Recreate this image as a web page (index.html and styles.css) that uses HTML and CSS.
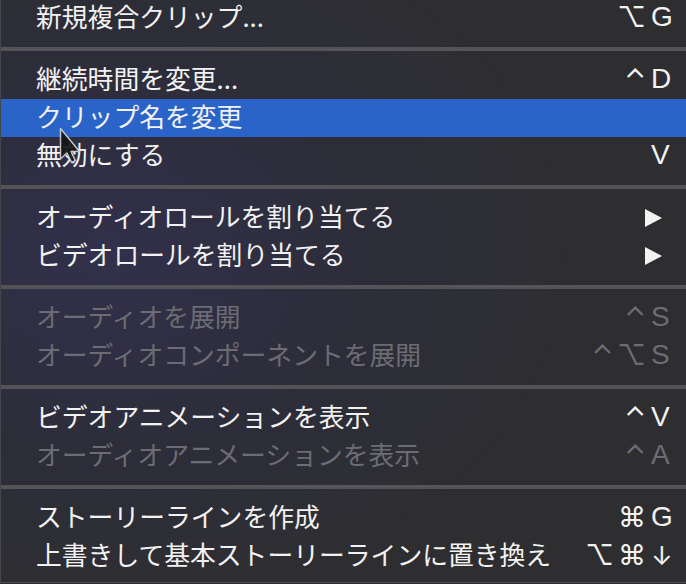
FILE: index.html
```html
<html>
    <head>
        <title>Clip Context Menu</title>
        <link rel="stylesheet" href="styles.css">
    </head>
    <body>
        <div id="menu">
            <div class="group first">
                <div class="item"><span class="label">新規複合クリップ...</span><span class="mods">⌥</span><span class="key">G</span></div>
            </div>
            <div class="sep"></div>
            <div class="group">
                <div class="item"><span class="label">継続時間を変更...</span><span class="mods">⌃</span><span class="key">D</span></div>
                <div class="item selected"><span class="label">クリップ名を変更</span></div>
                <div class="item"><span class="label">無効にする</span><span class="mods"></span><span class="key">V</span></div>
            </div>
            <div class="sep"></div>
            <div class="group">
                <div class="item"><span class="label">オーディオロールを割り当てる</span><span class="submenu"></span></div>
                <div class="item"><span class="label">ビデオロールを割り当てる</span><span class="submenu"></span></div>
            </div>
            <div class="sep"></div>
            <div class="group">
                <div class="item disabled"><span class="label">オーディオを展開</span><span class="mods">⌃</span><span class="key">S</span></div>
                <div class="item disabled"><span class="label">オーディオコンポーネントを展開</span><span class="mods">⌃⌥</span><span class="key">S</span></div>
            </div>
            <div class="sep"></div>
            <div class="group">
                <div class="item"><span class="label">ビデオアニメーションを表示</span><span class="mods">⌃</span><span class="key">V</span></div>
                <div class="item disabled"><span class="label">オーディオアニメーションを表示</span><span class="mods">⌃</span><span class="key">A</span></div>
            </div>
            <div class="sep"></div>
            <div class="group last">
                <div class="item"><span class="label">ストーリーラインを作成</span><span class="mods">⌘</span><span class="key">G</span></div>
                <div class="item"><span class="label">上書きして基本ストーリーラインに置き換え</span><span class="mods">⌥⌘</span><span class="key arrow">↓</span></div>
            </div>
            <svg class="cursor" width="24" height="38" viewBox="0 0 24 38">
                <path d="M1.5 1.5 L1.5 32 L8 26 L12.5 35.5 L16.5 33.8 L12 24.5 L20.5 24.5 Z" fill="#161616" stroke="#cfcfcf" stroke-width="1.5" stroke-linejoin="round" opacity="0.92" />
            </svg>
        </div>
    </body>
</html>
```

FILE: styles.css
```css
body {
    margin: 0;
    background-color: #2c2c33;
    overflow: hidden;
}
#menu {
    position: relative;
    margin-top: -11px;
    border-left: 1px solid #45454c;
    border-bottom: 1px solid #4a4a50;
    background: radial-gradient(ellipse 70% 60% at 15% 45%, #32304b 0%, #2d2d3b 50%, #2e2e31 100%);
    font-family: "Noto Sans CJK JP", sans-serif;
    font-size: 25.8px;
    color: #f2f2f2;
}
.group {
    padding: 10px 0;
}
.group.last {
    padding-bottom: 7px;
}
.sep {
    height: 4px;
    background-color: #535358;
}
.item {
    box-sizing: border-box;
    display: flex;
    align-items: center;
    height: 38px;
    padding: 0 16px 6px 35px;
}
.item.selected {
    background-color: #2a64c8;
}
.item.disabled {
    color: #6c6c74;
}
.label {
    flex: 1;
    white-space: nowrap;
}
.mods {
    font-family: Inter, "DejaVu Sans", sans-serif;
    font-size: 28px;
    letter-spacing: 4px;
    margin-right: 1px;
    margin-top: 4px;
}
.key {
    width: 19px;
    font-family: "Liberation Sans", sans-serif;
    font-size: 28px;
    margin-top: 4px;
}
.key.arrow {
    font-family: Inter, "DejaVu Sans", sans-serif;
    font-size: 26px;
    text-align: center;
}
.submenu {
    width: 0;
    height: 0;
    margin-right: 8px;
    margin-top: 6px;
    border-top: 9.5px solid transparent;
    border-bottom: 9.5px solid transparent;
    border-left: 17px solid #f2f2f2;
}
.cursor {
    position: absolute;
    left: 58px;
    top: 138px;
}
```
